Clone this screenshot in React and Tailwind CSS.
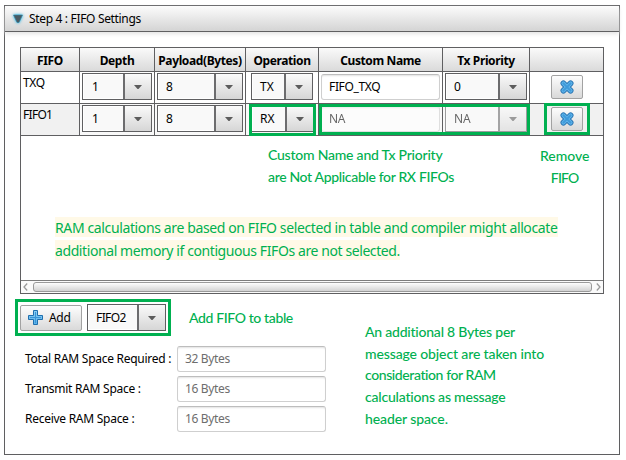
import { useId } from "react";

const GREEN = "text-[#00b050] whitespace-nowrap font-medium font-['Lato',sans-serif]";

function Caret() {
  return (
    <svg width="8" height="4" viewBox="0 0 8 4" className="block">
      <path d="M0 0h8L4.5 4h-1z" fill="#5c5c5c" />
    </svg>
  );
}

function Select({ value, className, arrow = "w-[28px]", pad = "pl-[9px]" }) {
  return (
    <div className={`flex h-[27px] border border-[#5f5f61] bg-[#f9f9f9] text-[12px] shadow-[inset_0_0_0_1px_#fff] ${className}`}>
      <div className={`flex flex-1 items-center whitespace-nowrap leading-none ${pad}`}>{value}</div>
      <div className={`flex shrink-0 items-center justify-center border-l-2 border-[#6c6c6e] bg-linear-to-b from-[#fafafa] to-[#d6d6d6] pt-px ${arrow}`}>
        <Caret />
      </div>
    </div>
  );
}

function Field({ value, className = "", muted }) {
  return (
    <div
      className={`flex h-[26px] items-center rounded-[3px] border border-[#cfcfcf] border-t-[#bdbdbd] bg-white pl-[7px] text-[12px] leading-none tracking-[-0.35px] whitespace-nowrap shadow-[inset_0_2px_2px_-1px_#e2e2e2] ${muted ? "text-[#6e6e6e]" : "text-black"} ${className}`}
    >
      {value}
    </div>
  );
}

function PlusIcon() {
  const id = useId();
  return (
    <svg width="16" height="16" viewBox="0 0 16 16" className="block">
      <defs>
        <linearGradient id={id} x1="0" y1="0" x2="0" y2="1">
          <stop offset="0" stopColor="#8fd0f6" />
          <stop offset="1" stopColor="#56b0ea" />
        </linearGradient>
      </defs>
      <path
        d="M5.500 .5h4v5h5v4h-5v5h-4v-5h-5v-4h5z"
        fill={`url(#${id})`} stroke="#1f6fae" strokeWidth="1" strokeLinejoin="round"
      />
      <path d="M7.500 2v11M2 7.500h11" stroke="#3a94d6" strokeWidth="1" />
    </svg>
  );
}

function CrossIcon() {
  const arms = "M4.400 4.400 11.600 11.600M11.600 4.400 4.400 11.600";
  return (
    <svg width="16" height="16" viewBox="0 0 16 16" className="block">
      <path d={arms} stroke="#2a76b4" strokeWidth="5.800" strokeLinecap="round" />
      <path d={arms} stroke="#5fb4ea" strokeWidth="4" strokeLinecap="round" />
      <path d={arms} stroke="#3f9ada" strokeWidth="2" strokeLinecap="round" />
    </svg>
  );
}

function RemoveButton() {
  return (
    <button className="flex h-[24px] w-[32px] items-center justify-center rounded-[2px] border border-[#a2a2a2] bg-linear-to-b from-[#fdfdfd] to-[#d9d9d9]">
      <CrossIcon />
    </button>
  );
}

const columns = ["FIFO", "Depth", "Payload(Bytes)", "Operation", "Custom Name", "Tx Priority", ""];

const GRID = "grid grid-cols-[59px_75px_91px_73px_124px_87px_73px]";
const CELL = "border-r border-b border-[#5f5f61]";

function Row({ name, op, custom, priority, alt }) {
  const bg = alt ? "bg-[#f1f1f1]" : "bg-white";
  const selectBg = alt ? "bg-[#f9f9f9]" : "bg-white";
  return (
    <div className={`${GRID} h-[32px]`}>
      <div className={`${CELL} ${bg} pt-[3px] pl-[2px] text-[12px] leading-[16px] ${alt ? "tracking-[-0.7px]" : "tracking-[-0.3px]"}`}>{name}</div>
      <div className={`${CELL} ${selectBg} pt-px pl-[2px]`}><Select value="1" className="w-[70px]" /></div>
      <div className={`${CELL} ${selectBg} pt-px pl-[2px]`}><Select value="8" className="w-[86px]" pad="pl-[8px]" /></div>
      <div className={`${CELL} ${selectBg} pt-px pl-[5px]`}>
        <Select value={op} className={alt ? "w-[63px]" : "w-[62px]"} pad="pl-[8px]" />
      </div>
      <div className={`${CELL} ${selectBg} pt-[2px] pl-[2px]`}>
        <Field value={custom} className={`w-[119px] ${alt ? "opacity-60" : ""}`} />
      </div>
      <div className={`${CELL} ${selectBg} pt-px pl-[2px]`}>
        <Select value={priority} className={`w-[82px] ${alt ? "opacity-60" : ""}`} pad="pl-[8px]" />
      </div>
      <div className={`border-b border-[#5f5f61] ${bg} flex pt-[3px] pl-[21px]`}><RemoveButton /></div>
    </div>
  );
}

function Chevron({ flip }) {
  return (
    <svg width="5" height="8" viewBox="0 0 5 8" className="block">
      <path d={flip ? "M.8 .5 4 4 .8 7.5" : "M4.2 .5 1 4 4.2 7.5"} fill="none" stroke="#9a9a9a" strokeWidth="1.3" />
    </svg>
  );
}

export default function App() {
  return (
    <div className="relative h-[460px] w-[626px] overflow-hidden bg-white pt-[5px] pl-[4px] font-['Noto_Sans',sans-serif] text-black">
      <section className="flex h-[450px] w-[616px] flex-col border border-[#5f5f61]">
        <header className="flex h-[26px] shrink-0 items-center border-b border-[#5f5f61] bg-linear-to-b from-[#fcfcfc] to-[#d4d4d4] pl-[7px] shadow-[0_2px_4px_#e4e4e4]">
          <svg width="12" height="10" viewBox="0 0 12 10" className="overflow-visible drop-shadow-[0_0_1.5px_#12b0e8]">
            <path d="M1.500 1h9L7 8.500H5z" fill="#4a5a62" stroke="#2c86a8" strokeWidth=".6" />
          </svg>
          <span className="ml-[5px] text-[12px] tracking-[-0.33px] whitespace-nowrap">Step 4 : FIFO Settings</span>
        </header>

        <div className="mt-[15px] ml-[15px] flex h-[247px] w-[584px] shrink-0 flex-col border border-[#5f5f61] bg-white">
          <div className={`${GRID} h-[24px]`}>
            {columns.map((label, i) => (
              <div
                key={i}
                className={`flex items-center justify-center border-b border-[#5f5f61] bg-linear-to-b from-[#fafafa] to-[#dadada] pt-[2px] text-[12px] font-bold tracking-[-0.38px] whitespace-nowrap ${i < 6 ? "border-r" : ""}`}
              >
                {label}
              </div>
            ))}
          </div>
          <Row name="TXQ" op="TX" custom="FIFO_TXQ" priority="0" />
          <Row name="FIFO1" op="RX" custom="NA" priority="NA" alt />
          <div className="flex-1" />
          <div className="flex h-[13px] items-center justify-between border-t border-[#7c7c7c] bg-[#fafafa] px-[2px]">
            <Chevron />
            <div className="h-[10px] w-[559px] rounded-[3px] border border-[#9a9a9a] bg-linear-to-b from-[#fdfdfd] to-[#d2d2d2]" />
            <Chevron flip />
          </div>
        </div>

        <div className="mt-[5px] ml-[10px] flex h-[37px] shrink-0 items-center">
          <div className="flex h-[37px] w-[156px] items-center border-[3px] border-[#00b050] pl-[2px]">
            <button className="flex h-[26px] w-[62px] items-center rounded-[2px] border border-[#a2a2a2] bg-linear-to-b from-[#fdfdfd] to-[#d9d9d9] pl-[7px] text-[12px]">
              <PlusIcon />
              <span className="ml-[5px] tracking-[-0.3px]">Add</span>
            </button>
            <Select value="FIFO2" className="ml-[5px] w-[79px] tracking-[-0.6px]" pad="pl-[8px]" />
          </div>
          <span className={`${GREEN} ml-[18px] text-[14px] tracking-[-0.38px]`}>Add FIFO to table</span>
        </div>

        <div className="flex">
          <div className="mt-[10px] ml-[20px] flex w-[301px] flex-col gap-[4px]">
            {[
              ["Total RAM Space Required :", "32 Bytes"],
              ["Transmit RAM Space :", "16 Bytes"],
              ["Receive RAM Space :", "16 Bytes"],
            ].map(([label, value]) => (
              <div key={label} className="flex items-center">
                <span className="w-[152px] text-[12px] tracking-[-0.27px] whitespace-nowrap">{label}</span>
                <Field value={value} muted className="w-[149px]" />
              </div>
            ))}
          </div>
          <p className={`${GREEN} mt-[-15px] ml-[39px] text-[14px] leading-[21.7px]`}>
            <span className="tracking-[-0.22px]">An additional 8 Bytes per</span><br />
            <span className="tracking-[-0.13px]">message object are taken into</span><br />
            <span className="tracking-[-0.41px]">consideration for RAM</span><br />
            <span className="tracking-[-0.2px]">calculations as message</span><br />
            <span className="tracking-[-0.1px]">header space.</span>
          </p>
        </div>
      </section>

      {/* Callouts drawn over the table */}
      <div className="absolute top-[104px] left-[249px] h-[32px] w-[67px] border-[3px] border-[#00b050]" />
      <div className="absolute top-[104px] left-[319px] h-[31px] w-[211px] border-[3px] border-[#00b050]" />
      <div className="absolute top-[103px] left-[544px] h-[32px] w-[46px] border-[3px] border-[#00b050]" />
      <p className={`${GREEN} absolute top-[144px] left-[268px] text-[14px] leading-[22px]`}>
        <span className="tracking-[-0.22px]">Custom Name and Tx Priority</span><br />
        <span className="tracking-[-0.34px]">are Not Applicable for RX FIFOs</span>
      </p>
      <p className={`${GREEN} absolute top-[145px] left-[540px] text-center text-[14px] leading-[22px]`}>
        <span className="tracking-[-0.05px]">Remove</span><br />
        <span className="tracking-[-0.8px]">FIFO</span>
      </p>
      <p className="absolute top-[217px] left-[55px] flex flex-col items-start gap-[3px] text-[14px] leading-[20px] whitespace-nowrap text-[#00b050]">
        <span className="bg-[#fff9e7] pt-px leading-[19px] tracking-[-0.375px]">
          RAM calculations are based on FIFO selected in table and compiler might allocate
        </span>
        <span className="bg-[#fff9e7] pt-px leading-[19px] tracking-[-0.41px]">
          additional memory if contiguous FIFOs are not selected.
        </span>
      </p>
    </div>
  );
}
